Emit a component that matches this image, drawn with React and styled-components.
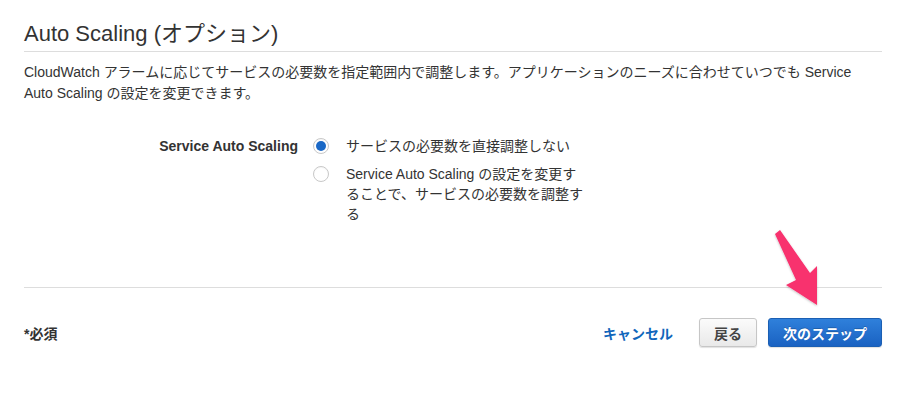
import React from "react";
import styled, { createGlobalStyle } from "styled-components";

const Global = createGlobalStyle`
  html, body { margin: 0; padding: 0; background: #fff; }
  body {
    font-family: "Liberation Sans", "Noto Sans CJK JP", sans-serif;
    color: #333;
  }
`;

const Page = styled.div`
  position: relative;
  width: 910px;
  height: 400px;
  box-sizing: border-box;
  padding: 19px 28px 0 24px;
`;

const Title = styled.h2`
  margin: 0;
  font-size: 22px;
  font-weight: 400;
  line-height: 30px;
  color: #333;
  padding-bottom: 2px;
  border-bottom: 1px solid #ddd;
`;

const Description = styled.p`
  margin: 10px 0 0;
  font-size: 14px;
  line-height: 21px;
  color: #333;
`;

const FormRow = styled.div`
  display: flex;
  margin-top: 32px;
`;

const FieldLabel = styled.div`
  width: 274px;
  flex: none;
  text-align: right;
  font-size: 14px;
  font-weight: 700;
  line-height: 20px;
  color: #333;
`;

const RadioList = styled.div`
  display: flex;
  flex-direction: column;
  gap: 8px;
  margin-left: 15px;
`;

const RadioOption = styled.label`
  display: flex;
  align-items: flex-start;
  gap: 17px;
  font-size: 14px;
  line-height: 20px;
  color: #333;
`;

const RadioCircle = styled.span`
  flex: none;
  width: 16px;
  height: 16px;
  margin-top: 2px;
  box-sizing: border-box;
  border-radius: 50%;
  border: 1px solid #c8c8c8;
  background: #fff;
  display: flex;
  align-items: center;
  justify-content: center;
  box-shadow: inset 0 1px 1px rgba(0, 0, 0, 0.04);
  &::after {
    content: "";
    width: 10px;
    height: 10px;
    border-radius: 50%;
    background: ${(p) => (p.$checked ? "#1a68c6" : "transparent")};
  }
`;

const OptionText = styled.span`
  width: 239px;
`;

const Divider = styled.hr`
  margin: 63px 0 0;
  border: 0;
  border-top: 1px solid #ddd;
  height: 0;
`;

const Footer = styled.div`
  display: flex;
  align-items: center;
  justify-content: space-between;
  margin-top: 30px;
`;

const Required = styled.div`
  font-size: 14px;
  font-weight: 700;
  color: #333;
`;

const Actions = styled.div`
  display: flex;
  align-items: center;
`;

const CancelLink = styled.a`
  font-size: 14px;
  font-weight: 700;
  color: #1166bb;
  text-decoration: none;
  margin-right: 26px;
  cursor: pointer;
`;

const Button = styled.button`
  height: 29px;
  box-sizing: border-box;
  padding: 0 14px;
  margin-left: ${(p) => (p.$primary ? "11px" : "0")};
  font-family: inherit;
  font-size: 14px;
  font-weight: 700;
  border-radius: 3px;
  cursor: pointer;
  color: ${(p) => (p.$primary ? "#fff" : "#444")};
  border: 1px solid ${(p) => (p.$primary ? "#1b5fb3" : "#c6c6c6")};
  background: ${(p) =>
    p.$primary
      ? "linear-gradient(#2f80db, #1a62c2)"
      : "linear-gradient(#fbfbfb, #e9e9e9)"};
  box-shadow: 0 1px 1px rgba(0, 0, 0, 0.12);
  text-shadow: ${(p) => (p.$primary ? "0 -1px 0 rgba(0,0,0,0.2)" : "none")};
`;

const Arrow = styled.svg`
  position: absolute;
  left: 770px;
  top: 225px;
  overflow: visible;
`;

export default function App() {
  return (
    <>
      <Global />
      <Page>
        <Title>Auto Scaling (オプション)</Title>
        <Description>
          CloudWatch アラームに応じてサービスの必要数を指定範囲内で調整します。アプリケーションのニーズに合わせていつでも Service Auto Scaling の設定を変更できます。
        </Description>
        <FormRow>
          <FieldLabel>Service Auto Scaling</FieldLabel>
          <RadioList>
            <RadioOption>
              <RadioCircle $checked />
              <OptionText>サービスの必要数を直接調整しない</OptionText>
            </RadioOption>
            <RadioOption>
              <RadioCircle />
              <OptionText>
                Service Auto Scaling の設定を変更することで、サービスの必要数を調整する
              </OptionText>
            </RadioOption>
          </RadioList>
        </FormRow>
        <Divider />
        <Footer>
          <Required>*必須</Required>
          <Actions>
            <CancelLink>キャンセル</CancelLink>
            <Button>戻る</Button>
            <Button $primary>次のステップ</Button>
          </Actions>
        </Footer>
        <Arrow width="60" height="85" viewBox="0 0 60 85">
          <defs>
            <filter id="sh" x="-30%" y="-30%" width="160%" height="160%">
              <feDropShadow dx="0" dy="1" stdDeviation="1.2" floodColor="#000" floodOpacity="0.25" />
            </filter>
          </defs>
          <polygon
            points="5,9 10,5 40,48 47,41 47,80 16,60 26,55"
            fill="#f8306e"
            filter="url(#sh)"
          />
        </Arrow>
      </Page>
    </>
  );
}
